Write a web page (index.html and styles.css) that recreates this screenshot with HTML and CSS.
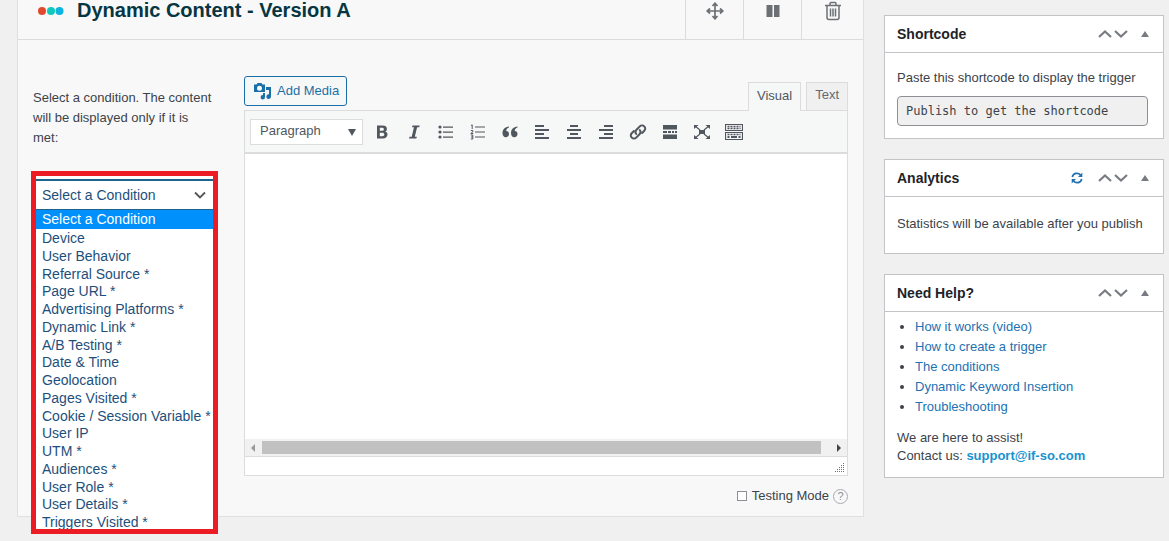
FILE: index.html
```html
<!DOCTYPE html>
<html lang="en">
<head>
<meta charset="utf-8">
<title>Dynamic Content</title>
<link rel="stylesheet" href="styles.css">
</head>
<body>
<svg class="sprite" aria-hidden="true">
  <symbol id="up" viewBox="0 0 14 8"><path d="M1 7l6-5.500 6 5.500" fill="none" stroke="currentColor" stroke-width="2.200"/></symbol>
  <symbol id="down" viewBox="0 0 14 8"><path d="M1 1l6 5.500 6-5.500" fill="none" stroke="currentColor" stroke-width="2.200"/></symbol>
  <symbol id="tri" viewBox="0 0 8 6"><path d="M0 6l4-6 4 6z" fill="currentColor"/></symbol>
</svg>
<div class="page">
  <main class="panel">
    <header class="panel-head">
      <svg class="brand" viewBox="0 0 26 8" aria-hidden="true"><circle cx="4" cy="4" r="4" fill="#e0492c"/><circle cx="13" cy="4" r="4" fill="#10c9bb"/><circle cx="21.500" cy="4" r="4" fill="#0eb3de"/></svg>
      <h1 class="title">Dynamic Content - Version A</h1>
      <button class="head-btn" aria-label="Move"><svg width="18" height="18" viewBox="0 0 18 18"><path d="M9 2v14M2 9h14M6.500 4L9 1.200 11.500 4M6.500 14L9 16.800 11.500 14M4 6.500L1.200 9 4 11.500M14 6.500L16.800 9 14 11.500" fill="none" stroke="currentColor" stroke-width="1.700"/></svg></button>
      <button class="head-btn" aria-label="Pause"><svg width="18" height="18" viewBox="0 0 18 18"><path d="M2.500 3h6v12h-6zM10 3h5.500v12H10z" fill="currentColor"/></svg></button>
      <button class="head-btn head-btn-last" aria-label="Delete"><svg width="18" height="20" viewBox="0 0 18 20"><path d="M1 4.500h16M6 4V2.700C6 2 6.400 1.500 7 1.500h4c.6 0 1 .5 1 1.200V4M3 5v11.500c0 1.200.8 2 2 2h8c1.200 0 2-.8 2-2V5M6.500 7.500v8M9 7.500v8M11.500 7.500v8" fill="none" stroke="currentColor" stroke-width="1.500"/></svg></button>
    </header>
    <div class="panel-body">
      <section class="condition">
        <label class="hint" for="cond">Select a condition. The content will be displayed only if it is met:</label>
        <div class="picker">
          <div class="frame">
            <div class="select-wrap">
              <select class="cond-select" id="cond"><option>Select a Condition</option></select>
              <svg class="cond-arrow" viewBox="0 0 12 8"><path d="M1 1.500l5 5 5-5" fill="none" stroke="currentColor" stroke-width="1.800"/></svg>
            </div>
            <ul class="options" role="listbox" aria-label="Conditions">
              <li class="option selected" role="option" aria-selected="true">Select a Condition</li>
              <li class="option" role="option">Device</li>
              <li class="option" role="option">User Behavior</li>
              <li class="option" role="option">Referral Source *</li>
              <li class="option" role="option">Page URL *</li>
              <li class="option" role="option">Advertising Platforms *</li>
              <li class="option" role="option">Dynamic Link *</li>
              <li class="option" role="option">A/B Testing *</li>
              <li class="option" role="option">Date &amp; Time</li>
              <li class="option" role="option">Geolocation</li>
              <li class="option" role="option">Pages Visited *</li>
              <li class="option" role="option">Cookie / Session Variable *</li>
              <li class="option" role="option">User IP</li>
              <li class="option" role="option">UTM *</li>
              <li class="option" role="option">Audiences *</li>
              <li class="option" role="option">User Role *</li>
              <li class="option" role="option">User Details *</li>
              <li class="option" role="option">Triggers Visited *</li>
            </ul>
          </div>
        </div>
      </section>
      <section class="editor">
        <div class="editor-top">
          <button class="media-btn"><svg width="18" height="18" viewBox="0 0 18 18"><path fill="currentColor" fill-rule="evenodd" d="M0 2.500h2.500L3.500 1h4l1 1.500H11V10H0zM5.500 3.700a2.500 2.500 0 1 0 0 5 2.500 2.500 0 0 0 0-5zM12 5h5v9.500a2.300 2.300 0 1 1-2-2.200V8h-3zM9 11h2v4a2.200 2.200 0 1 1-2-2z"/></svg>Add Media</button>
          <div class="tabs"><button class="tab active">Visual</button><button class="tab">Text</button></div>
        </div>
        <div class="edit-box">
          <div class="toolbar">
            <div class="format-wrap">
              <select class="format" aria-label="Format"><option>Paragraph</option></select>
              <svg class="format-arrow" viewBox="0 0 8 7"><path d="M0 0h8L4 7z" fill="currentColor"/></svg>
            </div>
            <button class="tool" aria-label="Bold"><svg viewBox="0 0 18 18"><path fill="currentColor" fill-rule="evenodd" d="M4 2.500h5.500c2.900 0 4.400 1.200 4.400 3.400 0 1.400-.7 2.300-1.800 2.700 1.500.4 2.400 1.500 2.400 3 0 2.400-1.800 3.900-4.700 3.900H4zM6.800 4.700v3h2.100c1.300 0 2-.5 2-1.500s-.7-1.500-2-1.500zm0 5.100v3.400h2.400c1.400 0 2.100-.6 2.100-1.700s-.7-1.700-2.200-1.700z"/></svg></button>
            <button class="tool" aria-label="Italic"><svg viewBox="0 0 18 18"><path fill="currentColor" d="M7.500 2.500h7.200l-.5 1.800h-2.100L9.800 13.700h2.100l-.6 1.800H4l.5-1.800h2.200L9 4.300H7z"/></svg></button>
            <button class="tool" aria-label="Bulleted list"><svg viewBox="0 0 18 18"><g fill="currentColor"><circle cx="3" cy="4" r="1.600"/><circle cx="3" cy="9" r="1.600"/><circle cx="3" cy="14" r="1.600"/><path d="M6 3.500h10v1.200H6zM6 8.500h10v1.200H6zM6 13.500h10v1.200H6z"/></g></svg></button>
            <button class="tool" aria-label="Numbered list"><svg viewBox="0 0 18 18"><path d="M6 4h10M6 9h10M6 14h10" stroke="currentColor" stroke-width="1.200"/><path d="M2 2.500l1.200-.7V6M1.800 7.500h2v1.400l-2 1.600h2.400M1.800 12h2v4h-2M2 14h1.800" stroke="currentColor" fill="none"/></svg></button>
            <button class="tool" aria-label="Quote"><svg viewBox="0 0 18 18"><path fill="currentColor" d="M8 3.500v1C6 5.200 5.300 6.400 5.200 8 7 8 8 9.200 8 11s-1.300 3.200-3.200 3.200C2.700 14.200 1.500 12.500 1.500 10 1.500 6.500 4 3.800 8 3.500zM16.500 3.500v1c-2 .7-2.700 1.900-2.800 3.500 1.800 0 2.800 1.200 2.800 3s-1.300 3.200-3.200 3.200C11.200 14.200 10 12.500 10 10c0-3.500 2.500-6.200 6.500-6.500z"/></svg></button>
            <button class="tool" aria-label="Align left"><svg viewBox="0 0 18 18"><path d="M2 3h9M2 7h14M2 11h9M2 15h14" stroke="currentColor" stroke-width="2"/></svg></button>
            <button class="tool" aria-label="Align center"><svg viewBox="0 0 18 18"><path d="M5 3h8M2 7h14M5 11h8M2 15h14" stroke="currentColor" stroke-width="2"/></svg></button>
            <button class="tool" aria-label="Align right"><svg viewBox="0 0 18 18"><path d="M7 3h9M2 7h14M7 11h9M2 15h14" stroke="currentColor" stroke-width="2"/></svg></button>
            <button class="tool" aria-label="Link"><svg viewBox="0 0 18 18"><g fill="none" stroke="currentColor" stroke-width="2" stroke-linecap="round"><path d="M7.200 11a3.200 3.200 0 0 1 .3-4.300l3.300-3.300a3.100 3.100 0 0 1 4.500 4.400l-2.200 2.200"/><path d="M10.800 7a3.200 3.200 0 0 1-.3 4.300l-3.300 3.300a3.100 3.100 0 0 1-4.500-4.400L4.900 8"/></g></svg></button>
            <button class="tool" aria-label="Read more"><svg viewBox="0 0 18 18"><path fill="currentColor" d="M2 2h14v4.500H2zM2 8h4v2H2zM7 8h3v2H7zM11 8h2v2h-2zM14 8h2v2h-2zM2 11.500h14V16H2z"/></svg></button>
            <button class="tool" aria-label="Fullscreen"><svg viewBox="0 0 18 18"><path fill="currentColor" d="M6 7h6v4H6zM1 2h4.500L1 6zM17 2v4l-4.500-4zM1 16v-4l4.500 4zM17 16h-4.500l4.500-4z"/><path d="M2 3l5 4M16 3l-5 4M2 15l5-4M16 15l-5-4" stroke="currentColor" stroke-width="1.200"/></svg></button>
            <button class="tool" aria-label="Toolbar toggle"><svg viewBox="0 0 18 18"><path d="M.5 1.500h17v6H.5zM.5 9.500h17v7H.5z" fill="none" stroke="currentColor" stroke-width="1.200"/><path d="M2.500 3.500h13M2.500 5.500h13M2.500 11.500h13" stroke="currentColor" stroke-width="1.300" stroke-dasharray="2 1"/><path d="M2.500 14h2M6 14h6M13.500 14h2" stroke="currentColor" stroke-width="1.800"/></svg></button>
          </div>
          <div class="canvas" contenteditable="true" role="textbox" aria-label="Content"></div>
          <div class="scrollbar">
            <svg class="scroll-arrow dim" viewBox="0 0 4 8"><path d="M4 0v8L0 4z" fill="currentColor"/></svg>
            <div class="thumb"></div>
            <svg class="scroll-arrow" viewBox="0 0 4 8"><path d="M0 0v8l4-4z" fill="currentColor"/></svg>
          </div>
          <div class="status"><svg width="10" height="10" viewBox="0 0 10 10"><path fill="#806b70" d="M8 0h1v1H8zM8 2h1v1H8zM6 2h1v1H6zM8 4h1v1H8zM6 4h1v1H6zM4 4h1v1H4zM8 6h1v1H8zM6 6h1v1H6zM4 6h1v1H4zM2 6h1v1H2zM8 8h1v1H8zM6 8h1v1H6zM4 8h1v1H4zM2 8h1v1H2zM0 8h1v1H0z"/></svg></div>
        </div>
        <div class="testing">
          <input class="check" type="checkbox" id="testing"><label for="testing">Testing Mode</label><button class="help" aria-label="Help">?</button>
        </div>
      </section>
    </div>
  </main>
  <aside class="side">
    <section class="card">
      <header class="card-head"><h2 class="card-title">Shortcode</h2><button class="act" aria-label="Move up"><svg class="chev"><use href="#up"/></svg></button><button class="act" aria-label="Move down"><svg class="chev"><use href="#down"/></svg></button><button class="act toggle" aria-label="Toggle"><svg class="tri"><use href="#tri"/></svg></button></header>
      <div class="card-body shortcode">
        <label for="code">Paste this shortcode to display the trigger</label>
        <input class="code" id="code" type="text" readonly value="Publish to get the shortcode">
      </div>
    </section>
    <section class="card">
      <header class="card-head"><h2 class="card-title">Analytics</h2><button class="act refresh" aria-label="Refresh"><svg width="12" height="12" viewBox="0 0 12 12"><path d="M1.300 5A4.700 4.700 0 0 1 9.500 3M10.700 7a4.700 4.700 0 0 1-8.200 2" fill="none" stroke="currentColor" stroke-width="1.700"/><path d="M11.300.5V5H7zM.7 11.500V7H5z" fill="currentColor"/></svg></button><button class="act" aria-label="Move up"><svg class="chev"><use href="#up"/></svg></button><button class="act" aria-label="Move down"><svg class="chev"><use href="#down"/></svg></button><button class="act toggle" aria-label="Toggle"><svg class="tri"><use href="#tri"/></svg></button></header>
      <p class="card-body stats">Statistics will be available after you publish</p>
    </section>
    <section class="card">
      <header class="card-head"><h2 class="card-title">Need Help?</h2><button class="act" aria-label="Move up"><svg class="chev"><use href="#up"/></svg></button><button class="act" aria-label="Move down"><svg class="chev"><use href="#down"/></svg></button><button class="act toggle" aria-label="Toggle"><svg class="tri"><use href="#tri"/></svg></button></header>
      <div class="card-body help-body">
        <ul class="links">
          <li><a href="#">How it works (video)</a></li>
          <li><a href="#">How to create a trigger</a></li>
          <li><a href="#">The conditions</a></li>
          <li><a href="#">Dynamic Keyword Insertion</a></li>
          <li><a href="#">Troubleshooting</a></li>
        </ul>
        <p class="contact">We are here to assist!<br>Contact us: <a class="mail" href="#">support@if-so.com</a></p>
      </div>
    </section>
  </aside>
</div>
</body>
</html>
```
FILE: styles.css
```css
* { box-sizing: border-box; }
body { margin: 0; background: #f0f0f0; color: #3c434a; font: 13px/20px "Liberation Sans", Arial, sans-serif; }
button, input, select { font: inherit; color: inherit; margin: 0; padding: 0; border: 0; background: none; }
select { appearance: none; }
svg { display: block; flex: none; }
h1, h2, p, ul { margin: 0; padding: 0; }
a { color: #2271b1; text-decoration: none; }
.sprite { position: absolute; width: 0; height: 0; }

.page { display: flex; align-items: flex-start; gap: 20px; min-height: 100vh; padding: 0 5px 0 17px; }
.panel { flex: 1; min-width: 0; background: #f8f8f8; border: 1px solid #dfe0e2; border-top: 0; }
.panel-head { display: flex; height: 40px; border-bottom: 1px solid #dcdcde; padding-left: 20px; }
.brand { width: 26px; height: 8px; margin-top: 7px; }
.title { flex: 1; margin-left: 13px; font-size: 20px; line-height: 20px; color: #063642; }
.head-btn { display: flex; justify-content: center; align-items: flex-start; width: 58px; padding-top: 2px; border-left: 1px solid #dcdcde; color: #6c7075; }
.head-btn-last { width: 62px; padding-top: 1px; }

.panel-body { display: flex; gap: 26px; padding: 36px 15px 10px 13px; }
.condition { width: 187px; flex: none; }
.hint { display: block; padding: 12px 2px 0; }
.picker { position: relative; margin-top: 23px; }
.frame { position: absolute; top: 0; left: 0; right: 0; height: 363px; padding-top: 3px; border: 5px solid #ec1c24; background: #fff; display: flex; flex-direction: column; overflow: hidden; font-size: 14px; color: #1d4f7c; }
.select-wrap { position: relative; flex: none; }
.cond-select { display: block; width: 100%; height: 31px; padding: 0 6px 1px; border-top: 2px solid #1d648f; border-bottom: 1px solid #1d648f; }
.cond-arrow { position: absolute; top: 12px; right: 7px; width: 12px; height: 8px; color: #555; pointer-events: none; }
.options { flex: 1; min-height: 0; display: flex; flex-direction: column; list-style: none; margin-bottom: -2px; }
.option { flex: 1; padding: 0 6px; line-height: 18px; white-space: nowrap; min-height: 0; }
.selected { flex: none; height: 19px; background: #0090fc; color: #fff; }

.editor { flex: 1; min-width: 0; }
.editor-top { display: flex; justify-content: space-between; height: 34px; }
.media-btn { display: flex; align-items: center; gap: 5px; height: 30px; padding: 0 7px 0 9px; border: 1px solid #1a70a6; border-radius: 3px; background: #f6f7f7; color: #1a70a6; }
.tabs { display: flex; gap: 5px; padding-top: 6px; }
.tab { height: 28px; padding: 0 8px 3px; border: 1px solid #dcdcde; border-bottom: 0; background: #f0f0f0; color: #646970; }
.active { position: relative; height: 29px; background: #f6f7f7; color: #50575e; }
.edit-box { border: 1px solid #dcdcde; background: #fff; }
.toolbar { display: flex; align-items: center; height: 43px; padding-left: 5px; background: #f6f7f7; border-bottom: 2px solid #dcdcde; color: #50575e; }
.format-wrap { position: relative; margin-right: 3px; }
.format { display: block; width: 113px; height: 26px; padding: 0 9px 2px; border: 1px solid #dcdcde; background: #fff; }
.format-arrow { position: absolute; right: 7px; top: 10px; width: 8px; height: 7px; pointer-events: none; }
.tool { display: flex; justify-content: center; width: 32px; }
.tool svg { width: 18px; height: 18px; }
.canvas { height: 285px; outline: 0; }
.scrollbar { display: flex; align-items: center; height: 18px; padding: 0 6px; gap: 7px; background: #f1f1f1; border-bottom: 1px solid #dcdcde; color: #444; }
.thumb { flex: 1; height: 13px; margin-right: 9px; background: #c1c1c1; }
.scroll-arrow { width: 4px; height: 8px; }
.dim { color: #999; }
.status { display: flex; justify-content: flex-end; align-items: flex-end; height: 18px; padding: 0 2px 2px; }
.testing { display: flex; justify-content: flex-end; align-items: center; margin-top: 10px; }
.check { appearance: none; width: 10px; height: 10px; margin-right: 5px; border: 1px solid #8c8f94; background: #fff; }
.help { width: 15px; height: 15px; margin-left: 4px; border: 1px solid #a7aaad; border-radius: 50%; color: #8c8f94; font-size: 11px; line-height: 13px; }

.side { display: flex; flex-direction: column; gap: 20px; width: 280px; padding-top: 15px; flex: none; }
.card { background: #fff; border: 1px solid #c3c4c7; }
.card-head { display: flex; align-items: center; height: 37px; padding: 0 14px 0 12px; border-bottom: 1px solid #c3c4c7; color: #787c82; }
.card-title { flex: 1; font-size: 14px; line-height: 20px; color: #1d2327; }
.act { display: flex; justify-content: center; width: 16px; }
.chev { width: 14px; height: 8px; }
.toggle { width: 8px; margin-left: 12px; }
.tri { width: 8px; height: 6px; }
.refresh { margin-right: 12px; color: #2271b1; }
.card-body { padding: 15px 15px 12px 12px; }
.code { display: block; width: 100%; height: 30px; margin-top: 8px; padding: 0 8px; border: 1px solid #8c8f94; border-radius: 4px; background: #f0f0f0; font: 12px "DejaVu Sans Mono", monospace; }
.stats { padding-top: 17px; padding-bottom: 19px; }
.help-body { padding-top: 5px; }
.links { padding-left: 18px; }
.contact { margin-top: 12px; line-height: 18px; }
.mail { font-weight: bold; color: #1793cf; }
```
